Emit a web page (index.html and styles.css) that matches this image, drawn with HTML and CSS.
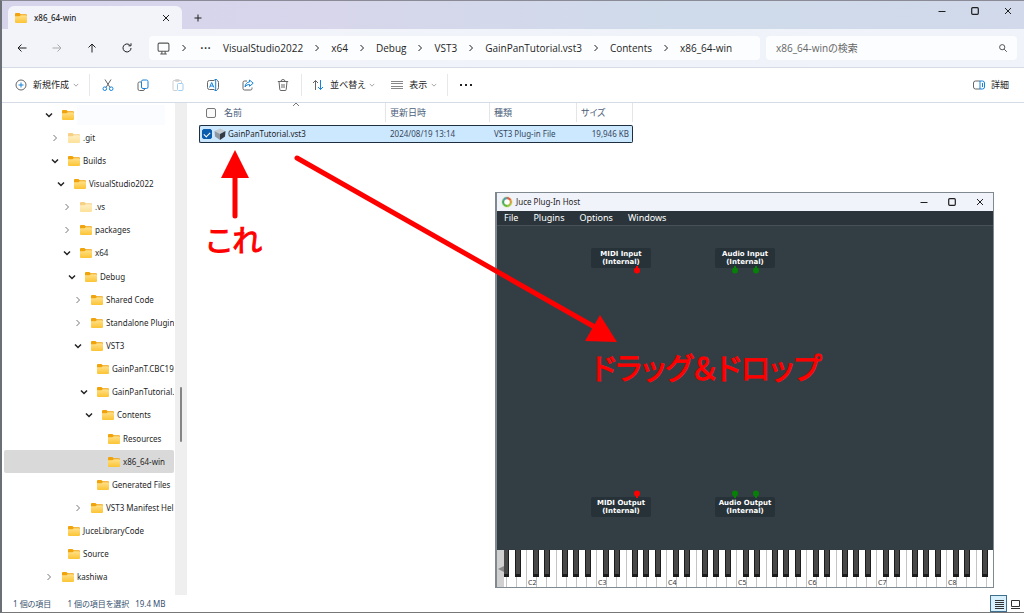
FILE: index.html
```html
<!DOCTYPE html>
<html lang="ja">
<head>
<meta charset="utf-8">
<title>x86_64-win</title>
<link rel="stylesheet" href="styles.css">
</head>
<body>
<svg class="defs" aria-hidden="true">
  <defs>
    <linearGradient id="fg" x1="0" y1="0" x2="0" y2="1"><stop offset="0" stop-color="#ffe08a"/><stop offset="1" stop-color="#fcc434"/></linearGradient>
    <symbol id="folder" viewBox="0 0 12 10"><path d="M0 1a1 1 0 0 1 1-1h3.400l1.300 1.200H11a1 1 0 0 1 1 1V5H0z" fill="#f0a30a"/><path d="M0 3.200h4.400l1.400-1H11a1 1 0 0 1 1 1V9a1 1 0 0 1-1 1H1a1 1 0 0 1-1-1z" fill="url(#fg)"/></symbol>
    <symbol id="right" viewBox="0 0 8 8"><path d="M2.500 1l3 3-3 3" fill="none" stroke="currentColor"/></symbol>
    <symbol id="down" viewBox="0 0 8 8"><path d="M1 2.500l3 3 3-3" fill="none" stroke="currentColor"/></symbol>
    <symbol id="close" viewBox="0 0 8 8"><path d="M1 1l6 6M7 1l-6 6" fill="none" stroke="currentColor"/></symbol>
    <symbol id="max" viewBox="0 0 8 8"><rect x=".7" y=".7" width="6.600" height="6.600" rx="1" fill="none" stroke="currentColor" stroke-width="1.200"/></symbol>
    <symbol id="min" viewBox="0 0 8 8"><path d="M.5 4.500h7" stroke="currentColor"/></symbol>
  </defs>
</svg>

<div class="explorer">
  <header class="titlebar">
    <div class="tab">
      <svg class="folder"><use href="#folder"/></svg>
      <span class="tab-name">x86_64-win</span>
      <button class="ghost" aria-label="タブを閉じる"><svg class="i8"><use href="#close"/></svg></button>
    </div>
    <button class="ghost new-tab" aria-label="新しいタブ"><svg class="i8" viewBox="0 0 8 8"><path d="M4 .5v7M.5 4h7" stroke="currentColor"/></svg></button>
    <div class="caption">
      <button class="ghost" aria-label="最小化"><svg class="i8"><use href="#min"/></svg></button>
      <button class="ghost" aria-label="最大化"><svg class="i8"><use href="#max"/></svg></button>
      <button class="ghost" aria-label="閉じる"><svg class="i8"><use href="#close"/></svg></button>
    </div>
  </header>

  <nav class="navbar">
    <div class="nav-buttons">
      <button class="ghost" aria-label="戻る"><svg class="i10" viewBox="0 0 10 10"><path d="M9.500 5H1M4.500 1.500L1 5l3.500 3.500" fill="none" stroke="currentColor"/></svg></button>
      <button class="ghost" aria-label="進む" disabled><svg class="i10" viewBox="0 0 10 10"><path d="M.5 5H9M5.500 1.500L9 5 5.500 8.500" fill="none" stroke="currentColor"/></svg></button>
      <button class="ghost" aria-label="上へ"><svg class="i10" viewBox="0 0 10 10"><path d="M5 9.500V1M1.500 4.500L5 1l3.500 3.500" fill="none" stroke="currentColor"/></svg></button>
      <button class="ghost" aria-label="更新"><svg class="i10" viewBox="0 0 10 10"><path d="M9 5a4 4 0 1 1-1.300-3M9 .3v2.500H6.500" fill="none" stroke="currentColor"/></svg></button>
    </div>
    <div class="address">
      <svg class="pc" viewBox="0 0 12 12"><rect x="1" y="1" width="10" height="7.500" rx="1.200" fill="none" stroke="#555"/><path d="M4.500 8.500v2.200M7.500 8.500v2.200M3 11h6" stroke="#555" fill="none"/></svg>
      <svg class="i8 sep-pc"><use href="#right"/></svg>
      <span class="dots">···</span>
      <a href="#">VisualStudio2022</a><svg class="i8"><use href="#right"/></svg>
      <a href="#">x64</a><svg class="i8"><use href="#right"/></svg>
      <a href="#">Debug</a><svg class="i8"><use href="#right"/></svg>
      <a href="#">VST3</a><svg class="i8"><use href="#right"/></svg>
      <a href="#">GainPanTutorial.vst3</a><svg class="i8"><use href="#right"/></svg>
      <a href="#">Contents</a><svg class="i8"><use href="#right"/></svg>
      <a href="#">x86_64-win</a>
    </div>
    <label class="search">
      <input type="text" placeholder="x86_64-winの検索" aria-label="検索">
      <svg class="i8" viewBox="0 0 8 8"><circle cx="3.200" cy="3.200" r="2.600" fill="none" stroke="#555"/><path d="M5.200 5.200l2.600 2.600" stroke="#555"/></svg>
    </label>
  </nav>

  <div class="toolbar">
    <button class="ghost new"><svg class="i12" viewBox="0 0 12 12"><circle cx="6" cy="6" r="5" fill="none" stroke="#666"/><path d="M6 3.500v5M3.500 6h5" stroke="#1683d8"/></svg>新規作成<svg class="tiny"><use href="#down"/></svg></button>
    <div class="actions">
      <button class="ghost" aria-label="切り取り"><svg class="i12" viewBox="0 0 12 12"><path d="M3 .5l5 8M9 .5l-5 8" stroke="#666" fill="none"/><circle cx="2.800" cy="9.700" r="1.800" fill="none" stroke="#1683d8"/><circle cx="9.200" cy="9.700" r="1.800" fill="none" stroke="#1683d8"/></svg></button>
      <button class="ghost" aria-label="コピー"><svg class="i12" viewBox="0 0 12 12"><path d="M4 3H2.500A1.500 1.500 0 0 0 1 4.500V10a1.500 1.500 0 0 0 1.500 1.500H6A1.500 1.500 0 0 0 7.500 10" fill="none" stroke="#666"/><rect x="4.500" y="1" width="6.500" height="8.500" rx="1.500" fill="none" stroke="#1683d8"/></svg></button>
      <button class="ghost faded" aria-label="貼り付け"><svg class="i12" viewBox="0 0 12 12"><path d="M5 11.500H2A1 1 0 0 1 1 10.500V2.500a1 1 0 0 1 1-1h6.500a1 1 0 0 1 1 1V4M3.500.7h3.500v1.600H3.500z" fill="none" stroke="#888"/><rect x="5.500" y="4.500" width="5.500" height="7" rx="1" fill="none" stroke="#1683d8"/></svg></button>
      <button class="ghost" aria-label="名前の変更"><svg class="i12" viewBox="0 0 12 12"><path d="M7.500 1.500H2.500A2 2 0 0 0 .5 3.500v5a2 2 0 0 0 2 2h5M10 1.500a1.800 1.800 0 0 1 1.500 2v5a1.800 1.800 0 0 1-1.500 2" fill="none" stroke="#666"/><path d="M2.500 8.500L4.700 3.500l2.200 5M3.300 7h2.800M8.700.5v11M7.500.5h2.400M7.500 11.500h2.400" fill="none" stroke="#1683d8"/></svg></button>
      <button class="ghost" aria-label="共有"><svg class="i12" viewBox="0 0 12 12"><path d="M5 2H2.500A1.500 1.500 0 0 0 1 3.500V9.500A1.500 1.500 0 0 0 2.500 11H8.500A1.500 1.500 0 0 0 10 9.500V8.500" fill="none" stroke="#666"/><path d="M7.500 1l3.700 3.200L7.500 7.300V5.500C5.500 5.500 4.300 6.200 3 8c.3-3 2-4.900 4.500-5.100z" fill="none" stroke="#1683d8"/></svg></button>
      <button class="ghost" aria-label="削除"><svg class="i12" viewBox="0 0 12 12"><path d="M.8 2.500h10.400M4 2.500a2 2 0 0 1 4 0M2 2.500l.8 8a1 1 0 0 0 1 1h4.400a1 1 0 0 0 1-1l.8-8M5 5v4M7 5v4" fill="none" stroke="#666"/></svg></button>
    </div>
    <button class="ghost sort"><svg class="i12" viewBox="0 0 12 12"><path d="M3.500 11V1.500M1 4l2.500-2.500L6 4" fill="none" stroke="#666"/><path d="M8.500 1v9.500M6 8l2.500 2.500L11 8" fill="none" stroke="#1683d8"/></svg>並べ替え<svg class="tiny"><use href="#down"/></svg></button>
    <button class="ghost view"><svg class="i12" viewBox="0 0 12 12"><path d="M0 2.500h12M0 4.500h12M0 7.500h12M0 9.500h12" stroke="#888"/></svg>表示<svg class="tiny"><use href="#down"/></svg></button>
    <button class="ghost more" aria-label="その他"><svg class="i12" viewBox="0 0 12 12"><path d="M0 5h2v2H0zM5 5h2v2H5zM10 5h2v2h-2z" fill="#222"/></svg></button>
    <button class="ghost details"><svg class="i12" viewBox="0 0 12 12"><path d="M7 2H2.500A2 2 0 0 0 .5 4v4a2 2 0 0 0 2 2H7" fill="none" stroke="#666"/><path d="M7 2h2.500a2 2 0 0 1 2 2v4a2 2 0 0 1-2 2H7zM9.500 4v4" fill="none" stroke="#1683d8"/></svg>詳細</button>
  </div>

  <main class="content">
    <ul class="tree">
      <li class="lv0"><svg class="i8 open"><use href="#down"/></svg><svg class="folder"><use href="#folder"/></svg><span class="blank"></span></li>
      <li class="lv1 hid"><svg class="i8"><use href="#right"/></svg><svg class="folder"><use href="#folder"/></svg>.git</li>
      <li class="lv1"><svg class="i8 open"><use href="#down"/></svg><svg class="folder"><use href="#folder"/></svg>Builds</li>
      <li class="lv2"><svg class="i8 open"><use href="#down"/></svg><svg class="folder"><use href="#folder"/></svg>VisualStudio2022</li>
      <li class="lv3 hid"><svg class="i8"><use href="#right"/></svg><svg class="folder"><use href="#folder"/></svg>.vs</li>
      <li class="lv3"><svg class="i8"><use href="#right"/></svg><svg class="folder"><use href="#folder"/></svg>packages</li>
      <li class="lv3"><svg class="i8 open"><use href="#down"/></svg><svg class="folder"><use href="#folder"/></svg>x64</li>
      <li class="lv4"><svg class="i8 open"><use href="#down"/></svg><svg class="folder"><use href="#folder"/></svg>Debug</li>
      <li class="lv5"><svg class="i8"><use href="#right"/></svg><svg class="folder"><use href="#folder"/></svg>Shared Code</li>
      <li class="lv5"><svg class="i8"><use href="#right"/></svg><svg class="folder"><use href="#folder"/></svg>Standalone Plugin</li>
      <li class="lv5"><svg class="i8 open"><use href="#down"/></svg><svg class="folder"><use href="#folder"/></svg>VST3</li>
      <li class="lv6"><svg class="i8"></svg><svg class="folder"><use href="#folder"/></svg>GainPanT.CBC19</li>
      <li class="lv6"><svg class="i8 open"><use href="#down"/></svg><svg class="folder"><use href="#folder"/></svg>GainPanTutorial.</li>
      <li class="lv7"><svg class="i8 open"><use href="#down"/></svg><svg class="folder"><use href="#folder"/></svg>Contents</li>
      <li class="lv8"><svg class="i8"></svg><svg class="folder"><use href="#folder"/></svg>Resources</li>
      <li class="lv8 selected"><svg class="i8"></svg><svg class="folder"><use href="#folder"/></svg>x86_64-win</li>
      <li class="lv6"><svg class="i8"></svg><svg class="folder"><use href="#folder"/></svg>Generated Files</li>
      <li class="lv5"><svg class="i8"><use href="#right"/></svg><svg class="folder"><use href="#folder"/></svg>VST3 Manifest Hel</li>
      <li class="lv1"><svg class="i8"></svg><svg class="folder"><use href="#folder"/></svg>JuceLibraryCode</li>
      <li class="lv1"><svg class="i8"></svg><svg class="folder"><use href="#folder"/></svg>Source</li>
      <li class="lv0"><svg class="i8"><use href="#right"/></svg><svg class="folder"><use href="#folder"/></svg>kashiwa</li>
    </ul>
    <div class="track"><div class="thumb"></div></div>
    <div class="files">
      <table>
        <thead>
          <tr>
            <th class="c-name"><label class="cell"><input type="checkbox">名前</label><svg class="i8 sorted" viewBox="0 0 8 8"><path d="M1 5l3-3 3 3" fill="none" stroke="#777"/></svg></th>
            <th class="c-date">更新日時</th>
            <th class="c-type">種類</th>
            <th class="c-size">サイズ</th>
          </tr>
        </thead>
        <tbody>
          <tr>
            <td><label class="cell"><input type="checkbox" checked><svg class="i12 cube" viewBox="0 0 12 12"><path d="M.5 3L6 .5 11.500 3 6 6z" fill="#c3cad0"/><path d="M.5 3L6 6v6L1 8.500z" fill="#8d979f"/><path d="M6 6l5.500-3L11 8.500 6 12z" fill="#343b42"/></svg>GainPanTutorial.vst3</label></td>
            <td>2024/08/19 13:14</td>
            <td>VST3 Plug-in File</td>
            <td class="num">19,946 KB</td>
          </tr>
        </tbody>
      </table>
    </div>
  </main>

  <footer class="status">
    <span>1 個の項目</span><span>1 個の項目を選択</span><span class="mb">19.4 MB</span>
    <div class="modes">
      <button class="ghost mode on" aria-label="詳細表示"><svg class="i12" viewBox="0 0 12 12"><path d="M2 2.500h9M2 4.500h9M2 6.500h9M2 8.500h9M2 10.500h9" stroke="#333"/></svg></button>
      <button class="ghost mode" aria-label="大アイコン"><svg class="i12" viewBox="0 0 12 12"><path d="M1.500 2.500h8v6h-8zM1 10.500h9" fill="none" stroke="#333"/></svg></button>
    </div>
  </footer>
</div>

<section class="host">
  <header class="host-title">
    <svg class="i12" viewBox="0 0 12 12"><circle cx="6" cy="6" r="5.700" fill="#dfe8b8"/><g fill="none" stroke-width="2.200"><path d="M6 2.200A3.800 3.800 0 0 1 9.300 4.100" stroke="#e55a4a"/><path d="M9.300 4.100A3.800 3.800 0 0 1 9.300 7.900" stroke="#d4a03c"/><path d="M9.300 7.900A3.800 3.800 0 0 1 6 9.800" stroke="#9bc53d"/><path d="M6 9.800A3.800 3.800 0 0 1 2.700 7.900" stroke="#58b947"/><path d="M2.700 7.900A3.800 3.800 0 0 1 2.700 4.100" stroke="#43a867"/><path d="M2.700 4.100A3.800 3.800 0 0 1 6 2.200" stroke="#4f9fb0"/></g><circle cx="6" cy="6" r="2.600" fill="#fff"/></svg>
    <span>Juce Plug-In Host</span>
    <div class="host-caption">
      <button class="ghost" aria-label="最小化"><svg class="i8"><use href="#min"/></svg></button>
      <button class="ghost" aria-label="最大化"><svg class="i8"><use href="#max"/></svg></button>
      <button class="ghost" aria-label="閉じる"><svg class="i8"><use href="#close"/></svg></button>
    </div>
  </header>
  <nav class="host-menu"><button class="ghost">File</button><button class="ghost">Plugins</button><button class="ghost">Options</button><button class="ghost">Windows</button></nav>
  <div class="graph">
    <div class="node midi-in">MIDI Input<br>(Internal)<svg class="pins" viewBox="0 0 60 8"><g fill="red"><path d="M45 0h2v3h-2z"/><circle cx="46" cy="4.500" r="3"/></g></svg></div>
    <div class="node audio-in">Audio Input<br>(Internal)<svg class="pins" viewBox="0 0 60 8"><g fill="#078007"><path d="M19 0h2v3h-2zM40 0h2v3h-2z"/><circle cx="20" cy="4.500" r="3"/><circle cx="41" cy="4.500" r="3"/></g></svg></div>
    <div class="node midi-out">MIDI Output<br>(Internal)<svg class="pins top" viewBox="0 0 60 8"><g fill="red"><path d="M45 4h2v4h-2z"/><circle cx="46" cy="3.500" r="3"/></g></svg></div>
    <div class="node audio-out">Audio Output<br>(Internal)<svg class="pins top" viewBox="0 0 60 8"><g fill="#078007"><path d="M19 4h2v4h-2zM40 4h2v4h-2z"/><circle cx="20" cy="3.500" r="3"/><circle cx="41" cy="3.500" r="3"/></g></svg></div>
  </div>
  <div class="keyboard">
    <button class="scroll-keys" aria-label="左へ"><svg class="i8" viewBox="0 0 8 8"><path d="M7 1v6L1 4z" fill="#888"/></svg></button>
    <svg class="keys">
      <defs>
        <g id="bk"><rect width="6" height="27" fill="#1c1c1c"/><rect x="1" width="4" height="24" fill="#484848"/></g>
        <pattern id="oct" x="22" width="70" height="38" patternUnits="userSpaceOnUse">
          <rect width="70" height="38" fill="#fff"/>
          <path d="M.5 0v38M10.500 0v38M20.500 0v38M30.500 0v38M40.500 0v38M50.500 0v38M60.500 0v38" stroke="#c4c4c4"/>
          <use href="#bk" x="7"/><use href="#bk" x="18"/><use href="#bk" x="36"/><use href="#bk" x="47"/><use href="#bk" x="59"/>
        </pattern>
      </defs>
      <rect width="100%" height="38" fill="url(#oct)"/>
      <g class="key-labels"><text x="24" y="35">C2</text><text x="94" y="35">C3</text><text x="164" y="35">C4</text><text x="234" y="35">C5</text><text x="304" y="35">C6</text><text x="374" y="35">C7</text><text x="444" y="35">C8</text></g>
    </svg>
  </div>
</section>

<svg class="arrows" viewBox="0 0 440 210" aria-hidden="true">
  <path d="M45 66V25M107 8L410 180" stroke="red" stroke-width="5" stroke-linecap="round" fill="none"/>
  <path d="M45 0l14 28H31zM427 192l-32-1 15-26z" fill="red"/>
</svg>
<p class="note this">これ</p>
<p class="note drag">ドラッグ＆ドロップ</p>
</body>
</html>
```
FILE: styles.css
```css
* { box-sizing: border-box; }
body {
  margin: 0;
  height: 100vh;
  position: relative;
  overflow: hidden;
  background: #fff;
  color: #1f1f1f;
  font: 9px/12px "Noto Sans", "Noto Sans CJK JP", sans-serif;
  font-feature-settings: "palt";
}
.defs { position: absolute; width: 0; height: 0; }
svg { flex: none; display: block; }
.i8 { width: 8px; height: 8px; }
.i10 { width: 10px; height: 10px; }
.i12 { width: 12px; height: 12px; }
.tiny { width: 6px; height: 6px; margin-left: -2px; color: #888; }
.folder { width: 12px; height: 10px; }
.ghost {
  display: flex;
  align-items: center;
  justify-content: center;
  border: 0;
  padding: 0;
  background: none;
  color: inherit;
  font: inherit;
  font-feature-settings: inherit;
  white-space: nowrap;
}
.explorer {
  height: 100%;
  display: flex;
  flex-direction: column;
  border-left: 2px solid #6b7076;
  border-top: 1px solid #8a8b96;
  border-bottom: 1px solid #777;
}

/* title bar */
.titlebar {
  height: 28px;
  display: flex;
  align-items: flex-end;
  padding-left: 6px;
  background: linear-gradient(90deg, #d5d4eb 0%, #d7d6eb 33%, #cfdbea 66%, #d1d9ea 100%);
}
.tab {
  width: 174px;
  height: 23px;
  display: flex;
  align-items: center;
  gap: 7px;
  padding: 0 12px 0 7px;
  border-radius: 6px 6px 0 0;
  background: #f3f4fa;
}
.tab-name { flex: 1; font-size: 8px; font-weight: 500; }
.new-tab { width: 32px; height: 23px; }
.caption {
  margin-left: auto;
  align-self: flex-start;
  display: flex;
  gap: 25px;
  padding: 6px 12px 0 0;
}

/* navigation */
.navbar {
  height: 39px;
  display: flex;
  align-items: center;
  padding-right: 7px;
  border-bottom: 1px solid #d5dce6;
  background: linear-gradient(90deg, #f3f4fa, #eff3f9 66%, #f1f3fa);
  font-family: "Open Sans", "Noto Sans CJK JP", sans-serif;
}
.nav-buttons { display: flex; gap: 25px; padding: 0 17px 0 15px; }
.nav-buttons button:disabled { color: #aaa; }
.address {
  flex: 1;
  height: 24px;
  display: flex;
  align-items: center;
  gap: 10px;
  padding-left: 8px;
  border-radius: 4px;
  background: #fcfdfe;
  font-size: 10px;
}
.address a { color: inherit; text-decoration: none; }
.pc { width: 13px; height: 13px; }
.dots { padding: 0 2px; font-size: 14px; }
.search {
  width: 251px;
  height: 24px;
  display: flex;
  align-items: center;
  margin-left: 6px;
  padding: 0 10px;
  border-radius: 4px;
  background: #fcfdfe;
}
.search input {
  flex: 1;
  border: 0;
  padding: 0;
  outline: 0;
  background: none;
  font: inherit;
  font-size: 10px;
  font-feature-settings: inherit;
}
.search input::placeholder { color: #666; }

/* commands */
.toolbar {
  height: 35px;
  display: flex;
  align-items: center;
  padding: 0 15px 0 13px;
  border-bottom: 1px solid #d5dce6;
}
.toolbar .ghost { gap: 6px; }
.new { padding-right: 10px; }
.actions {
  display: flex;
  gap: 23px;
  padding: 5px 12px;
  border: solid #e8e8e8;
  border-width: 0 1px;
}
.faded { opacity: .4; }
.sort { padding: 0 16px 0 10px; }
.view { height: 22px; padding-right: 10px; border-right: 1px solid #e8e8e8; }
.more { padding-left: 12px; }
.details { margin-left: auto; }

/* folder tree */
.content { flex: 1; min-height: 0; display: flex; }
.tree {
  width: 172px;
  margin: 0;
  padding: 0 0 6px 2px;
  list-style: none;
  display: flex;
  flex-direction: column;
  font-size: 8px;
  overflow: hidden;
}
.tree li {
  flex: 1;
  display: flex;
  align-items: center;
  white-space: nowrap;
  overflow: hidden;
}
.tree .folder { margin: 0 3px 0 9px; }
.tree .i8 { color: #777; }
.tree .open { color: #222; stroke-width: 1.5; }
.hid .folder { opacity: .5; }
.lv0 { padding-left: 41px; }
.lv1 { padding-left: 47px; }
.lv2 { padding-left: 53px; }
.lv3 { padding-left: 59px; }
.lv4 { padding-left: 64px; }
.lv5 { padding-left: 70px; }
.lv6 { padding-left: 76px; }
.lv7 { padding-left: 81px; }
.lv8 { padding-left: 87px; }
.tree .selected { border-radius: 2px; background: #d9d9d9; }
.blank { width: 88px; height: 20px; background: #fafcff; }
.track { width: 12px; margin-left: 1px; padding: 284px 4px 0 5px; background: #efefef; }
.thumb { width: 2px; height: 55px; border-radius: 1px; background: #858585; }

/* file list */
.files { flex: 1; padding-left: 12px; }
table { border-collapse: separate; border-spacing: 0; table-layout: fixed; width: 434px; }
th {
  height: 19px;
  padding: 0 0 0 4px;
  position: relative;
  border-right: 1px solid #e5e5e5;
  color: #4c607a;
  font-weight: normal;
  text-align: left;
}
.c-name { width: 187px; }
.c-date { width: 104px; }
.c-type { width: 87px; }
.c-size { width: 56px; }
.cell { display: flex; align-items: center; }
th .cell { padding-left: 3px; gap: 8px; }
td .cell { gap: 2px; }
.sorted { position: absolute; left: 50%; top: -2px; }
input[type=checkbox] {
  appearance: none;
  display: grid;
  place-items: center;
  width: 10px;
  height: 10px;
  margin: 0;
  border: 1px solid #777;
  border-radius: 2px;
  background: #fafafa;
}
input[type=checkbox]:checked { border-color: #0a5cad; background: #0a5cad; }
input[type=checkbox]:checked::before {
  content: "";
  width: 5px;
  height: 3px;
  margin-bottom: 1px;
  border: solid #fff;
  border-width: 0 0 1px 1px;
  transform: rotate(-45deg);
}
tbody::before { content: ""; display: block; height: 3px; }
td {
  height: 18px;
  padding: 0 3px 0 4px;
  border: solid #1d2f40;
  border-width: 1px 0;
  background: #cce8ff;
  font-size: 8px;
  white-space: nowrap;
  color: #37475a;
}
td:first-child { border-left-width: 1px; border-radius: 2px 0 0 2px; padding-left: 2px; color: #1f1f1f; }
td:last-child { border-right-width: 1px; border-radius: 0 2px 2px 0; }
.num { text-align: right; }

/* status bar */
.status { height: 17px; display: flex; align-items: center; padding-left: 11px; gap: 16px; color: #37506e; font-size: 8px; }
.mb { margin-left: -10px; }
.modes { margin-left: auto; display: flex; align-self: stretch; }
.mode { width: 17px; }
.mode.on { border: 1px solid #3e6f8f; background: #d8effc; }

/* plug-in host */
.host {
  position: absolute;
  left: 495px;
  top: 192px;
  width: 499px;
  height: 396px;
  display: flex;
  flex-direction: column;
  border: solid #808890;
  border-width: 1px 1px 1px 2px;
  background: #333e44;
}
.host-title { height: 18px; display: flex; align-items: center; gap: 3px; padding-left: 4px; background: #f1f3fa; font-size: 8px; }
.host-caption { margin-left: auto; display: flex; gap: 20px; padding-right: 9px; }
.host-menu {
  height: 15px;
  display: flex;
  align-items: center;
  gap: 15px;
  padding-left: 7px;
  border-bottom: 1px solid #465056;
  background: #2a343a;
  color: #fff;
  font-size: 9px;
}
.graph { flex: 1; position: relative; }
.node {
  position: absolute;
  width: 60px;
  height: 20px;
  padding-top: 2px;
  border-radius: 2px;
  background: #263238;
  color: #fff;
  font: bold 7px/8px "DejaVu Sans", sans-serif;
  text-align: center;
  white-space: nowrap;
}
.midi-in { left: 94px; top: 22px; }
.audio-in { left: 218px; top: 22px; }
.midi-out { left: 94px; top: 271px; }
.audio-out { left: 218px; top: 271px; }
.pins { position: absolute; left: 0; top: 18px; width: 60px; height: 8px; }
.pins.top { top: -7px; }
.keyboard { height: 37px; display: flex; background: #fff; }
.scroll-keys { width: 7px; padding: 0; border: 0; background: #d0d0d0; }
.keys { flex: 1; min-width: 0; height: 37px; }
.key-labels { font-size: 7px; fill: #333; }

/* annotations */
.arrows { position: absolute; left: 190px; top: 150px; width: 440px; height: 210px; }
.note {
  position: absolute;
  margin: 0;
  color: #f00;
  font: 30px/40px "Noto Sans CJK JP", sans-serif;
  font-feature-settings: "palt";
  -webkit-text-stroke: 1px #f00;
  white-space: nowrap;
}
.this { left: 206px; top: 218px; }
.drag { left: 592px; top: 346px; }
```
